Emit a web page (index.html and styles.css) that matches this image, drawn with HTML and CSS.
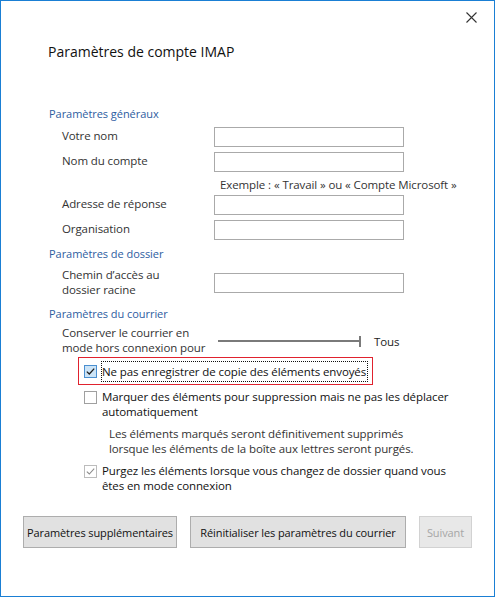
FILE: index.html
```html
<!DOCTYPE html>
<html lang="fr">
<head>
<meta charset="utf-8">
<title>Paramètres de compte IMAP</title>
<link rel="stylesheet" href="styles.css">
</head>
<body>
<div class="window">
  <div class="titlebar">
    <button class="close" aria-label="Fermer">
      <svg width="11" height="11" viewBox="0 0 11 11"><path d="M0.5 0.5 L10.5 10.5 M10.5 0.5 L0.5 10.5" stroke="#333" stroke-width="1.1" fill="none"/></svg>
    </button>
  </div>
  <div class="content">
    <h1 class="title">Paramètres de compte IMAP</h1>

    <div class="section-head first">Paramètres généraux</div>
    <div class="fields">
      <div class="row"><label class="lbl">Votre nom</label><input class="field" type="text"></div>
      <div class="row"><label class="lbl">Nom du compte</label><input class="field" type="text"></div>
      <div class="row example"><span class="lbl"></span><span class="hint">Exemple : « Travail » ou « Compte Microsoft »</span></div>
      <div class="row"><label class="lbl">Adresse de réponse</label><input class="field" type="text"></div>
      <div class="row"><label class="lbl">Organisation</label><input class="field" type="text"></div>
    </div>

    <div class="section-head second">Paramètres de dossier</div>
    <div class="fields">
      <div class="row tall"><label class="lbl two">Chemin d’accès au<br>dossier racine</label><input class="field" type="text"></div>
    </div>

    <div class="section-head third">Paramètres du courrier</div>
    <div class="fields">
      <div class="row slider-row">
        <label class="lbl two">Conserver le courrier en<br>mode hors connexion pour</label>
        <div class="slider"><span class="track"></span><span class="thumb"></span></div>
        <span class="slider-value">Tous</span>
      </div>
    </div>

    <div class="checks">
      <div class="check focused">
        <span class="box checked"><svg width="11" height="11" viewBox="0 0 11 11"><path d="M1.8 5.6 L4.3 8 L9.2 2.6" stroke="#1e1e1e" stroke-width="1.3" fill="none"/></svg></span>
        <span class="check-text focus-ring">Ne pas enregistrer de copie des éléments envoyés</span>
      </div>
      <div class="check second-check">
        <span class="box"></span>
        <span class="check-text">Marquer des éléments pour suppression mais ne pas les déplacer<br>automatiquement</span>
      </div>
      <p class="note">Les éléments marqués seront définitivement supprimés<br>lorsque les éléments de la boîte aux lettres seront purgés.</p>
      <div class="check third-check">
        <span class="box checked disabled"><svg width="11" height="11" viewBox="0 0 11 11"><path d="M1.8 5.6 L4.3 8 L9.2 2.6" stroke="#8c8c8c" stroke-width="1.1" fill="none"/></svg></span>
        <span class="check-text">Purgez les éléments lorsque vous changez de dossier quand vous<br>êtes en mode connexion</span>
      </div>
    </div>
  </div>
  <div class="buttons">
    <button class="btn b1">Paramètres supplémentaires</button>
    <button class="btn b2">Réinitialiser les paramètres du courrier</button>
    <button class="btn b3" disabled>Suivant</button>
  </div>
</div>
</body>
</html>
```
FILE: styles.css
```css
* { box-sizing: border-box; }
html, body { margin: 0; padding: 0; background: #fff; }
body {
  font-family: "Open Sans", "Noto Sans", sans-serif;
  font-size: 11.5px;
  letter-spacing: -0.1px;
  color: #1a1a1a;
}
.window {
  width: 495px;
  height: 597px;
  border: 1px solid #1a7fd4;
  background: #fff;
  display: flex;
  flex-direction: column;
}
.titlebar {
  height: 32px;
  display: flex;
  justify-content: flex-end;
  align-items: flex-start;
}
.close {
  width: 34px;
  height: 28px;
  margin: 2px 6px 0 0;
  padding: 0;
  border: 0;
  background: transparent;
  display: flex;
  align-items: center;
  justify-content: center;
}
.content { padding-left: 47px; }
.title {
  margin: 9px 0 0 0;
  font-size: 14px;
  font-weight: normal;
  letter-spacing: 0;
  line-height: 20px;
  color: #111;
}
.section-head {
  font-size: 11px;
  letter-spacing: -0.05px;
  line-height: 16px;
  height: 16px;
  color: #2e5d9f;
  margin-left: 1px;
}
.section-head.first { margin-top: 44px; margin-bottom: 5px; }
.section-head.second { margin-top: 1px; margin-bottom: 6px; }
.section-head.third { margin-top: 8px; margin-bottom: 4px; }
.fields { padding-left: 14px; }
.row {
  display: flex;
  align-items: flex-start;
  height: 25px;
}
.row.example { height: 18px; }
.row.tall { height: 30px; align-items: center; }
.lbl {
  width: 152px;
  flex: none;
  line-height: 17px;
  color: #333;
  white-space: nowrap;
}
.lbl.two { line-height: 14.7px; }
.field {
  width: 190px;
  height: 20px;
  margin: 0;
  border: 1px solid #aaaaaa;
  background: #fff;
  font: inherit;
  padding: 0 3px;
}
.hint {
  line-height: 15px;
  padding-left: 6px;
  color: #333;
  white-space: nowrap;
}
.slider-row { height: 30px; align-items: center; }
.slider {
  width: 143px;
  height: 12px;
  margin-left: 4px;
  display: flex;
  align-items: center;
}
.track { flex: 1; height: 2px; background: #7a7a7a; }
.thumb { width: 2px; height: 11px; background: #7a7a7a; }
.slider-value { margin-left: 13px; color: #222; line-height: 15px; }

.checks { margin-left: 30px; }
.check {
  display: flex;
  align-items: flex-start;
  white-space: nowrap;
  line-height: 14.5px;
  color: #111;
}
.check.focused {
  width: 295px;
  height: 28px;
  margin-top: 1px;
  border: 1px solid #e0222e;
  padding: 0 0 0 5px;
  align-items: center;
}
.box {
  width: 13px;
  height: 13px;
  flex: none;
  border: 1px solid #a0a0a0;
  background: #fff;
  margin-top: 1px;
  margin-right: 5px;
  display: flex;
  align-items: center;
  justify-content: center;
}
.box.checked { border-color: #4a8fd0; background: #cce4f7; }
.box.checked.disabled { border-color: #bcbcbc; background: #fff; }
.focused .box { margin-top: 0; }
.focus-ring {
  outline: 1px dotted #111;
  padding: 2px 1px 2px 0;
  line-height: 15px;
}
.check.second-check, .check.third-check { padding-left: 6px; }
.check.second-check { margin-top: 5px; }
.note {
  margin: 8px 0 0 31px;
  line-height: 14.7px;
  color: #333;
  white-space: nowrap;
}
.check.third-check { margin-top: 8px; }

.buttons {
  display: flex;
  gap: 13px;
  padding-left: 22px;
  margin-top: 23px;
}
.btn {
  height: 32px;
  margin: 0;
  padding: 0;
  font: inherit;
  font-size: 11px;
  letter-spacing: -0.1px;
  background: #e1e1e1;
  border: 1px solid #adadad;
  color: #111;
  white-space: nowrap;
}
.b1 { width: 154px; }
.b2 { width: 216px; }
.b3 { width: 53px; background: #e8e8e8; border-color: #d2d2d2; color: #a6a6a6; }
```
